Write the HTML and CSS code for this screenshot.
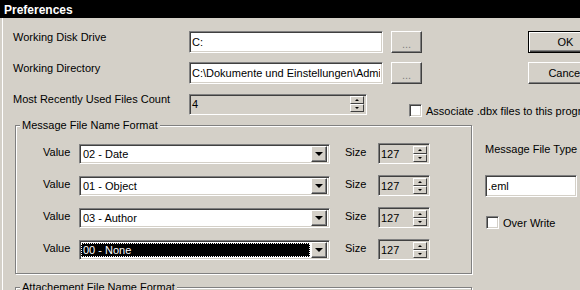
FILE: index.html
```html
<!DOCTYPE html>
<html lang="en">
<head>
    <meta charset="UTF-8">
    <title>Preferences</title>
    <link rel="stylesheet" href="styles.css">
</head>
<body>
    <div class="titlebar">Preferences</div>

    <div class="client">
        <div class="row">
            <span class="field-label">Working Disk Drive</span>
            <input class="edit path" type="text" value="C:">
            <button class="btn browse">...</button>
            <button class="btn dlg default">OK</button>
        </div>

        <div class="row">
            <span class="field-label">Working Directory</span>
            <input class="edit path" type="text" value="C:\Dokumente und Einstellungen\Administrator">
            <button class="btn browse">...</button>
            <button class="btn dlg">Cancel</button>
        </div>

        <div class="row">
            <span class="field-label">Most Recently Used Files Count</span>
            <div class="edit spin count">
                <span class="spin-value">4</span>
                <span class="spin-btns"><i class="up"></i><i class="down"></i></span>
            </div>
            <label class="check assoc"><span class="box"></span>Associate .dbx files to this program</label>
        </div>

        <div class="middle">
            <fieldset class="group">
                <legend>Message File Name Format</legend>

                <div class="value-row">
                    <span class="value-label">Value</span>
                    <div class="edit combo"><span class="combo-text">02 - Date</span><span class="drop"></span></div>
                    <span class="size-label">Size</span>
                    <div class="edit spin size"><span class="spin-value">127</span><span class="spin-btns"><i class="up"></i><i class="down"></i></span></div>
                </div>

                <div class="value-row">
                    <span class="value-label">Value</span>
                    <div class="edit combo"><span class="combo-text">01 - Object</span><span class="drop"></span></div>
                    <span class="size-label">Size</span>
                    <div class="edit spin size"><span class="spin-value">127</span><span class="spin-btns"><i class="up"></i><i class="down"></i></span></div>
                </div>

                <div class="value-row">
                    <span class="value-label">Value</span>
                    <div class="edit combo"><span class="combo-text">03 - Author</span><span class="drop"></span></div>
                    <span class="size-label">Size</span>
                    <div class="edit spin size"><span class="spin-value">127</span><span class="spin-btns"><i class="up"></i><i class="down"></i></span></div>
                </div>

                <div class="value-row">
                    <span class="value-label">Value</span>
                    <div class="edit combo focused"><span class="combo-text">00 - None</span><span class="drop"></span></div>
                    <span class="size-label">Size</span>
                    <div class="edit spin size"><span class="spin-value">127</span><span class="spin-btns"><i class="up"></i><i class="down"></i></span></div>
                </div>
            </fieldset>

            <div class="side">
                <span class="side-label">Message File Type</span>
                <input class="edit ext" type="text" value=".eml">
                <label class="check overwrite"><span class="box"></span>Over Write</label>
            </div>
        </div>

        <fieldset class="group attach">
            <legend>Attachement File Name Format</legend>
        </fieldset>
    </div>
</body>
</html>
```

FILE: styles.css
```css
body {
    margin: 0;
    width: 580px;
    height: 290px;
    overflow: hidden;
    background-color: #d4d0c8;
    font-family: "Liberation Sans", Arial, sans-serif;
    font-size: 11px;
    color: #000;
}

.titlebar {
    height: 18px;
    padding-left: 4px;
    background-color: #000;
    color: #fff;
    font-weight: bold;
    font-size: 12px;
    line-height: 21px;
    overflow: hidden;
}

.client {
    margin-left: 2px;
    border-left: 1px solid #fff;
    padding: 13px 0 0 10px;
    height: 300px;
    white-space: nowrap;
}

/* top rows */
.row {
    display: flex;
    align-items: center;
    height: 22px;
    margin-bottom: 9px;
}

.row:nth-child(3) {
    margin-bottom: 4px;
}

.field-label {
    width: 176px;
    flex-shrink: 0;
    align-self: flex-start;
    line-height: 13px;
}

/* sunken edit box, win classic */
.edit {
    box-sizing: border-box;
    height: 22px;
    margin: 0;
    padding: 0 2px;
    border: 1px solid;
    border-color: #808080 #fff #fff #808080;
    box-shadow: inset 1px 1px 0 #404040, inset -1px -1px 0 #d4d0c8;
    background-color: #fff;
    font-family: inherit;
    font-size: 11px;
    color: #000;
    outline: none;
    flex-shrink: 0;
}

.path {
    width: 194px;
}

.btn {
    box-sizing: border-box;
    height: 22px;
    padding: 0;
    border: 1px solid;
    border-color: #fff #404040 #404040 #fff;
    box-shadow: inset -1px -1px 0 #808080;
    background-color: #d4d0c8;
    font-family: inherit;
    font-size: 11px;
    color: #000;
    flex-shrink: 0;
}

.browse {
    width: 31px;
    margin-left: 8px;
    color: #808080;
    padding-top: 4px;
}

.dlg {
    width: 75px;
    margin-left: 106px;
}

.default {
    border-color: #000;
    box-shadow: inset 1px 1px 0 #fff, inset -1px -1px 0 #404040, inset -2px -2px 0 #808080;
}

/* spinners */
.spin {
    display: flex;
    align-items: center;
    background-color: #d4d0c8;
    padding-right: 2px;
}

.spin-value {
    flex: 1;
    color: #000;
}

.count {
    width: 178px;
    height: 21px;
}

.spin-btns {
    display: flex;
    flex-direction: column;
}

.spin-btns i {
    box-sizing: border-box;
    width: 14px;
    height: 8px;
    border: 1px solid;
    border-color: #fff #404040 #404040 #fff;
    background-color: #d4d0c8;
    display: flex;
    align-items: center;
    justify-content: center;
}

.spin-btns i::after {
    content: "";
    border-left: 2px solid transparent;
    border-right: 2px solid transparent;
}

.spin-btns .up::after {
    border-bottom: 2px solid #000;
}

.spin-btns .down::after {
    border-top: 2px solid #000;
}

/* checkboxes */
.check {
    display: flex;
    align-items: center;
}

.check .box {
    box-sizing: border-box;
    width: 13px;
    height: 13px;
    margin-right: 4px;
    border: 1px solid;
    border-color: #808080 #fff #fff #808080;
    box-shadow: inset 1px 1px 0 #404040, inset -1px -1px 0 #d4d0c8;
    background-color: #fff;
}

.assoc {
    margin-left: 42px;
    align-self: flex-end;
    margin-bottom: -2px;
}

/* group boxes */
.middle {
    display: flex;
    align-items: flex-start;
}

.group {
    box-sizing: border-box;
    width: 457px;
    flex-shrink: 0;
    margin: 0 0 0 2px;
    padding: 12px 0 13px 27px;
    border: 1px solid #808080;
    box-shadow: inset 1px 1px 0 #fff, 1px 1px 0 #fff;
    min-width: 0;
}

.group legend {
    margin-left: -23px;
    padding: 0 2px;
    background-color: #d4d0c8;
}

.value-row {
    display: flex;
    align-items: center;
    height: 21px;
    margin-bottom: 11px;
}

.value-row:last-child {
    margin-bottom: 0;
}

.value-label {
    width: 36px;
    margin-top: -3px;
}

.combo {
    display: flex;
    align-items: center;
    width: 251px;
    height: 20px;
    padding: 0 2px;
}

.combo-text {
    flex: 1;
    padding-left: 1px;
}

.focused .combo-text {
    margin-left: -1px;
    margin-right: 1px;
    padding-left: 2px;
    line-height: 14px;
    background-color: #000;
    color: #fff;
    outline: 1px dotted #fff;
    outline-offset: -1px;
}

.drop {
    box-sizing: border-box;
    width: 16px;
    height: 16px;
    border: 1px solid;
    border-color: #fff #404040 #404040 #fff;
    box-shadow: inset -1px -1px 0 #808080;
    background-color: #d4d0c8;
    display: flex;
    align-items: center;
    justify-content: center;
}

.drop::after {
    content: "";
    border-left: 4px solid transparent;
    border-right: 4px solid transparent;
    border-top: 4px solid #000;
}

.size-label {
    width: 33px;
    margin-left: 15px;
    margin-top: -3px;
}

.size {
    width: 52px;
    height: 21px;
}

.side {
    display: flex;
    flex-direction: column;
    margin-left: 13px;
    padding-top: 24px;
}

.ext {
    width: 92px;
    height: 22px;
    margin-top: 20px;
}

.overwrite {
    margin-top: 19px;
    margin-left: 1px;
}

.attach {
    height: 40px;
    margin-top: 7px;
}
```
